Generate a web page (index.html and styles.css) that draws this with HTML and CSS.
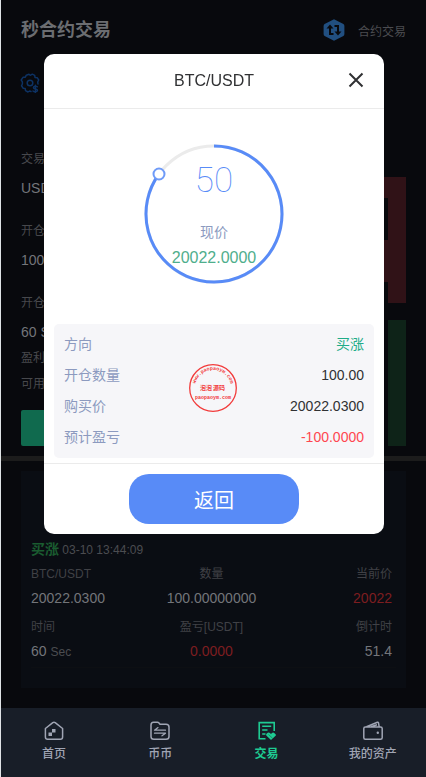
FILE: index.html
```html
<!DOCTYPE html>
<html lang="zh-CN">
<head>
<meta charset="utf-8">
<meta name="viewport" content="width=device-width, initial-scale=1">
<title>秒合约交易</title>
<link rel="stylesheet" href="styles.css">
</head>
<body>
<div class="page">
  <header class="topbar">
    <h1 class="title">秒合约交易</h1>
    <a class="switch" href="#">
      <svg width="22" height="22" viewBox="0 0 22 22" aria-hidden="true">
        <path d="M11 0.2 20.4 5Q21.4 5.6 21.4 7V15Q21.4 16.4 20.4 17L11 21.8 1.6 17Q.6 16.4 .6 15V7Q.6 5.6 1.6 5Z" fill="#214f80"/>
        <path d="M10.5 15H7V8M11.5 7H15V14" fill="none" stroke="#08090d" stroke-width="2"/>
        <path d="M3.5 9.5 7 5.5 10.5 9.5ZM11.5 12.5 15 16.5 18.5 12.5Z" fill="#08090d"/>
      </svg>
      <span>合约交易</span>
    </a>
  </header>

  <div class="tools">
    <svg width="20" height="20" viewBox="0 0 20 20" fill="none" stroke="#0d3263" stroke-width="1.5" stroke-linejoin="round" stroke-linecap="round" aria-hidden="true">
      <path d="M11 18.5 9.5 18 8 19 5.5 17.6 5.2 15.5 3.2 15.2 1.5 12.8 2.4 11V8.8L1.2 7 3 4.3 5.3 4.2 6.3 2.2 9 1.2 10.2 2.3 12.3 1.2 14.7 2.4 15 4.4 17.2 4.7 18.7 7 17.7 9 18 11"/>
      <circle cx="10" cy="10" r="2.8"/>
      <path d="M17.3 13.8C16.4 13 13.4 13 13.4 14.7S17.5 15.5 17.5 17.3 14 19 13 18M15.4 12.3V19.6"/>
    </svg>
  </div>

  <main>
    <section class="market">
      <div class="form">
        <div class="field"><span class="label">交易模式</span><span class="value">USDT</span></div>
        <div class="field"><span class="label">开仓数量</span><span class="value">100</span></div>
        <div class="field"><span class="label">开仓时间</span><span class="value">60 Sec</span></div>
        <div class="note">盈利</div>
        <div class="note">可用</div>
        <button class="buy" type="button" aria-label="买涨"></button>
      </div>
      <div class="book" aria-hidden="true">
        <div class="depth sell"><i class="wide"></i><i></i><i></i><i class="wide"></i><i class="wide"></i><i></i></div>
        <div class="depth buyers"><i></i><i></i><i></i><i></i><i></i><i></i></div>
      </div>
    </section>

    <section class="order">
      <div class="order-head"><b>买涨</b> <time>03-10 13:44:09</time></div>
      <dl class="stats">
        <div><dt>BTC/USDT</dt><dd>20022.0300</dd></div>
        <div><dt>数量</dt><dd>100.00000000</dd></div>
        <div><dt>当前价</dt><dd class="down">20022</dd></div>
        <div><dt>时间</dt><dd>60 <small>Sec</small></dd></div>
        <div><dt>盈亏[USDT]</dt><dd class="down">0.0000</dd></div>
        <div><dt>倒计时</dt><dd>51.4</dd></div>
      </dl>
    </section>
  </main>

  <nav class="tabs">
    <a href="#">
      <svg width="20" height="20" viewBox="0 0 20 20" fill="none" stroke="currentColor" stroke-width="1.5" stroke-linejoin="round" aria-hidden="true">
        <path d="M1.4 7.5 8.8 1.6Q10 .8 11.2 1.6L18.6 7.5V16Q18.6 18.3 16.4 18.3H3.6Q1.4 18.3 1.4 16Z"/>
        <path d="M4.5 11.5h3.5v3.5H4.5zM8 8h3.5v3.5H8z" fill="currentColor" stroke="none"/>
      </svg>
      <span>首页</span>
    </a>
    <a href="#">
      <svg width="20" height="20" viewBox="0 0 20 20" fill="none" stroke="currentColor" stroke-width="1.5" stroke-linejoin="round" stroke-linecap="round" aria-hidden="true">
        <path d="M3.5 1.2H7.5Q8.3 1.2 9 2L10 3.2H16Q19 3.2 19 6V15.5Q19 18.3 16 18.3H3.8Q1 18.3 1 15.5V4Q1 1.2 3.5 1.2Z"/>
        <path d="M15.5 9.2H4.5L8 6.6M4.5 12.2H15.5L12 14.8" stroke-width="1.3"/>
      </svg>
      <span>币币</span>
    </a>
    <a href="#" class="active">
      <svg width="20" height="20" viewBox="0 0 20 20" fill="none" stroke="currentColor" stroke-width="1.6" aria-hidden="true">
        <path d="M17.2 10V1.6H2.2V17.8H8.5M5.2 5.3H14.2M5.2 9H10.5M5.2 13H8.5"/>
        <path d="M14 19 9.3 14.4Q8.8 13.6 9.5 12.8L10.8 11.8Q12 11.2 13.2 12.3L14 13 15 12Q16.2 11.2 17.2 12L18.8 13.5Q19.2 14.2 18.6 14.8Z" fill="currentColor" stroke="none"/>
        <path d="M11.5 13.5 15.5 17.2" stroke="#181e28" stroke-width=".4"/>
      </svg>
      <span>交易</span>
    </a>
    <a href="#">
      <svg width="20" height="20" viewBox="0 0 20 20" fill="none" stroke="currentColor" stroke-width="1.5" stroke-linejoin="round" aria-hidden="true">
        <path d="M2.3 6H17.5Q19.2 6 19.2 7.5V16.8Q19.2 18.3 17.5 18.3H2.3Q.8 18.3 .8 16.8V7.5Q.8 6 2.3 6ZM3.5 5.8 14.4 1.3Q15.2 1.1 15.5 1.8L16.2 5.8M8 5.8 14 3.8"/>
        <circle cx="14.8" cy="11.8" r="1.2" fill="currentColor" stroke="none"/>
      </svg>
      <span>我的资产</span>
    </a>
  </nav>
</div>

<div class="modal" role="dialog" aria-labelledby="pair">
  <header class="modal-head">
    <h2 id="pair">BTC/USDT</h2>
    <button class="close" type="button" aria-label="关闭">
      <svg width="16" height="16" viewBox="0 0 16 16" aria-hidden="true"><path d="M1.5 1.5 14.5 14.5M14.5 1.5 1.5 14.5" stroke="#303133" stroke-width="2"/></svg>
    </button>
  </header>
  <div class="modal-body">
    <div class="timer">
      <svg class="ring" width="140" height="140" viewBox="0 0 140 140" fill="none" aria-hidden="true">
        <circle cx="70" cy="70" r="68" stroke="#ebebeb" stroke-width="3"/>
        <path d="M70 2A68 68 0 1 1 15 30" stroke="#588bf7" stroke-width="3"/>
        <circle cx="15" cy="30" r="5.5" fill="#fff" stroke="#6f9bf8" stroke-width="2"/>
      </svg>
      <strong class="count">50</strong>
      <span class="now">现价</span>
      <span class="price">20022.0000</span>
    </div>
    <dl class="detail">
      <div><dt>方向</dt><dd class="rise">买涨</dd></div>
      <div><dt>开仓数量</dt><dd>100.00</dd></div>
      <div><dt>购买价</dt><dd>20022.0300</dd></div>
      <div><dt>预计盈亏</dt><dd class="loss">-100.0000</dd></div>
    </dl>
    <svg class="stamp" width="50" height="50" viewBox="0 0 50 50" fill="#f23b3b" aria-hidden="true">
      <circle cx="25" cy="25" r="23.3" fill="none" stroke="#f23b3b" stroke-width="1.3"/>
      <path id="arc" d="M6.8 25A18.2 18.2 0 0 1 43.2 25" fill="none"/>
      <text class="stamp-arc"><textPath href="#arc" startOffset="50%" text-anchor="middle">www.paopaoym.com</textPath></text>
      <text class="stamp-name" y="27"><tspan x="12">泡</tspan><tspan x="18">泡</tspan><tspan x="25">源</tspan><tspan x="31">码</tspan></text>
      <text class="stamp-site" x="25" y="36" text-anchor="middle">paopaoym.com</text>
    </svg>
  </div>
  <footer class="modal-foot"><button class="back" type="button">返回</button></footer>
</div>
</body>
</html>
```
FILE: styles.css
```css
* { box-sizing: border-box; }

body {
  margin: 0;
  background: #08090d;
  color: #73757a;
  font-family: "Liberation Sans", "Noto Sans CJK SC", sans-serif;
  font-size: 14px;
}

h1, h2, dl, dd { margin: 0; }
a { color: inherit; text-decoration: none; }
button { border: 0; padding: 0; font: inherit; cursor: pointer; }
svg { display: block; }

.page {
  display: flex;
  flex-direction: column;
  min-height: 100vh;
  border-left: 1px solid #dfe3e6;
}

.topbar {
  display: flex;
  align-items: center;
  justify-content: space-between;
  height: 60px;
  padding: 0 20px;
}
.title { font-size: 18px; line-height: 24px; color: #6b6d71; }
.switch {
  display: flex;
  align-items: center;
  gap: 13px;
  font-size: 12px;
  color: #4b4c50;
}

.tools {
  display: flex;
  align-items: center;
  height: 46px;
  padding: 0 19px;
}

.market {
  display: flex;
  justify-content: space-between;
  padding: 44px 20px 10px;
  border-bottom: 5px solid #1c1c1c;
}
.form { width: 55%; }
.field { display: flex; flex-direction: column; margin-bottom: 21px; }
.field:nth-child(3) { margin-bottom: 0; }
.label { font-size: 12px; line-height: 18px; margin-bottom: 7px; color: #47484c; }
.value { line-height: 26px; }
.note { font-size: 12px; line-height: 26px; color: #47484c; }
.buy {
  display: block;
  width: 100%;
  height: 36px;
  margin-top: 13px;
  border-radius: 2px;
  background: #106a4e;
}

.book {
  display: flex;
  flex-direction: column;
  gap: 17px;
  width: 35%;
  padding-top: 27px;
}
.depth { display: flex; flex-direction: column; align-items: flex-end; }
.depth i { width: 18px; height: 21px; }
.depth .wide { width: 60px; }
.sell i { background: #301217; }
.buyers i { background: #0e2318; }

.order {
  margin: 10px 20px 20px;
  padding: 69px 10px 20px;
  background: #0a0d13;
}
.order-head { line-height: 18px; font-size: 12px; color: #4b4c50; }
.order-head b { font-size: 14px; color: #1a5c30; }
.stats {
  display: grid;
  grid-template-columns: 1fr auto 1fr;
  row-gap: 5px;
  padding: 3px 4px 3px 0;
  border-bottom: 1px solid #0d0f13;
}
.stats div { text-align: center; }
.stats div:nth-child(3n + 1) { text-align: left; }
.stats div:nth-child(3n) { text-align: right; }
.stats dt { font-size: 12px; line-height: 24px; color: #404146; }
.stats dd { line-height: 24px; }
.stats small { font-size: 12px; color: #4b4c50; }
.stats .down { color: #7d1d20; }

.tabs {
  display: grid;
  grid-template-columns: repeat(4, 1fr);
  margin-top: auto;
  padding: 13px 0 14px;
  background: #181e28;
  color: #a0a5b4;
}
.tabs a {
  display: flex;
  flex-direction: column;
  align-items: center;
  gap: 4px;
  font-size: 12px;
  line-height: 18px;
  font-weight: 500;
}
.tabs .active { color: #1ecb92; font-weight: 700; }

.modal {
  position: fixed;
  top: 54px;
  left: 44px;
  right: 42px;
  border-radius: 10px;
  background: #fff;
  color: #303133;
}
.modal-head {
  position: relative;
  padding: 15px 0;
  border-bottom: 1px solid #ebebeb;
  text-align: center;
}
.modal-head h2 { font-size: 16px; line-height: 24px; font-weight: 400; }
.close {
  position: absolute;
  top: 18px;
  right: 20px;
  background: none;
}

.modal-body { position: relative; padding: 35px 10px 5px; }
.timer {
  position: relative;
  display: flex;
  flex-direction: column;
  align-items: center;
  width: 140px;
  height: 140px;
  margin: 0 auto 40px;
  padding-top: 16px;
}
.ring { position: absolute; inset: 0; }
.timer > :not(.ring) { position: relative; }
.count {
  font-family: Roboto, sans-serif;
  font-size: 35px;
  line-height: 42px;
  font-weight: 100;
  color: #588bf7;
}
.now { margin-top: 20px; line-height: 20px; color: #8c9abf; }
.price { margin-top: 4px; font-size: 16px; line-height: 24px; color: #4fae8c; }

.detail { padding: 5px 10px; border-radius: 5px; background: #f6f6f9; }
.detail div { display: flex; justify-content: space-between; line-height: 31px; }
.detail dt { color: #8c9abf; }
.detail .rise { color: #1fac88; }
.detail .loss { color: #ff4650; }

.stamp { position: absolute; left: 50%; bottom: 50px; margin-left: -26px; }
.stamp-arc { font: 700 5px "Liberation Mono", monospace; }
.stamp-name { font: 700 6px "Noto Sans CJK SC", sans-serif; }
.stamp-site { font: 700 5px "Liberation Mono", monospace; }

.modal-foot { padding: 10px; border-top: 1px solid #ebebeb; }
.back {
  display: block;
  width: 170px;
  height: 50px;
  margin: 0 auto;
  border-radius: 20px;
  background: #588bf7;
  color: #fff;
  font-size: 20px;
}
```
